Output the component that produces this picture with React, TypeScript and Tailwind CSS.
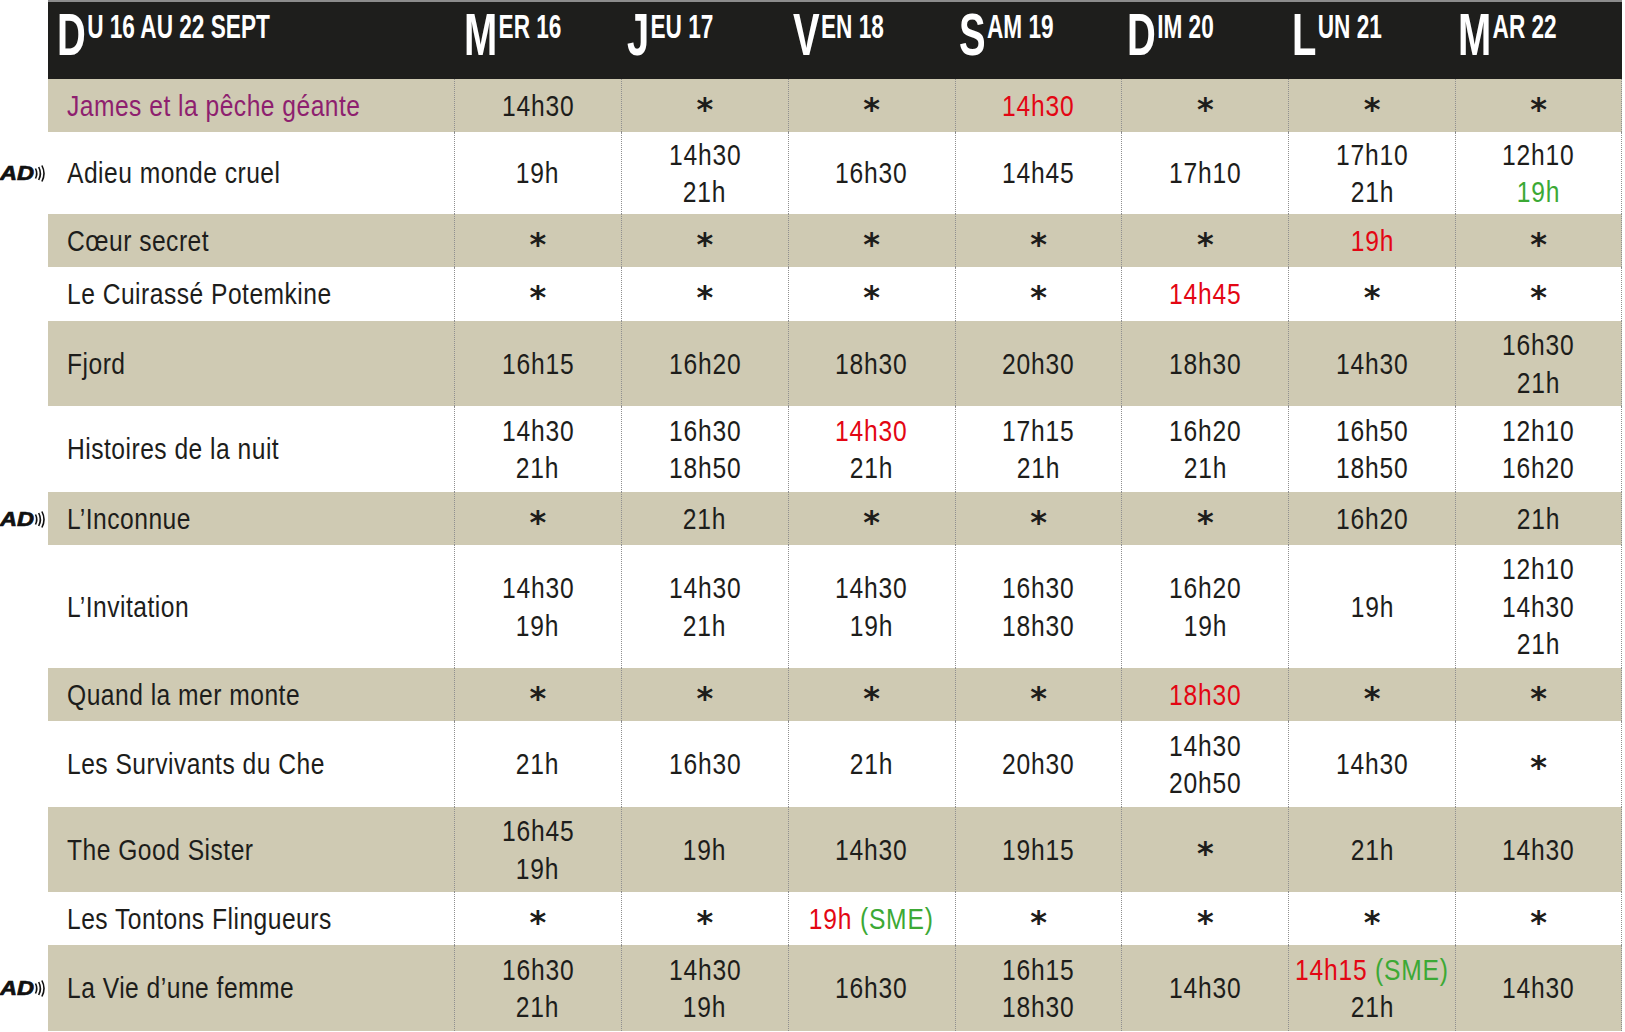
import React from "react";

type RowData = {
  name: string;
  purple?: boolean;
  ad?: boolean;
  tan: boolean;
  h: string;
  cells: string[];
};

const rows: RowData[] = [
  { name: "James et la pêche géante", purple: true, tan: true, h: "h-[53px]", cells: ["14h30", "*", "*", "r:14h30", "*", "*", "*"] },
  { name: "Adieu monde cruel", ad: true, tan: false, h: "h-[82px]", cells: ["19h", "14h30\n21h", "16h30", "14h45", "17h10", "17h10\n21h", "12h10\ng:19h"] },
  { name: "Cœur secret", tan: true, h: "h-[53px]", cells: ["*", "*", "*", "*", "*", "r:19h", "*"] },
  { name: "Le Cuirassé Potemkine", tan: false, h: "h-[54px]", cells: ["*", "*", "*", "*", "r:14h45", "*", "*"] },
  { name: "Fjord", tan: true, h: "h-[85px]", cells: ["16h15", "16h20", "18h30", "20h30", "18h30", "14h30", "16h30\n21h"] },
  { name: "Histoires de la nuit", tan: false, h: "h-[86px]", cells: ["14h30\n21h", "16h30\n18h50", "r:14h30\n21h", "17h15\n21h", "16h20\n21h", "16h50\n18h50", "12h10\n16h20"] },
  { name: "L’Inconnue", ad: true, tan: true, h: "h-[53px]", cells: ["*", "21h", "*", "*", "*", "16h20", "21h"] },
  { name: "L’Invitation", tan: false, h: "h-[123px]", cells: ["14h30\n19h", "14h30\n21h", "14h30\n19h", "16h30\n18h30", "16h20\n19h", "19h", "12h10\n14h30\n21h"] },
  { name: "Quand la mer monte", tan: true, h: "h-[53px]", cells: ["*", "*", "*", "*", "r:18h30", "*", "*"] },
  { name: "Les Survivants du Che", tan: false, h: "h-[86px]", cells: ["21h", "16h30", "21h", "20h30", "14h30\n20h50", "14h30", "*"] },
  { name: "The Good Sister", tan: true, h: "h-[85px]", cells: ["16h45\n19h", "19h", "14h30", "19h15", "*", "21h", "14h30"] },
  { name: "Les Tontons Flingueurs", tan: false, h: "h-[53px]", cells: ["*", "*", "r:19h|g: (SME)", "*", "*", "*", "*"] },
  { name: "La Vie d’une femme", ad: true, tan: true, h: "h-[86px]", cells: ["16h30\n21h", "14h30\n19h", "16h30", "16h15\n18h30", "14h30", "r:14h15|g: (SME)\n21h", "14h30"] },
];

const days: { big: string; rest: string; pad: string }[] = [
  { big: "M", rest: "ER 16", pad: "pl-[10px]" },
  { big: "J", rest: "EU 17", pad: "pl-[6px]" },
  { big: "V", rest: "EN 18", pad: "pl-[5px]" },
  { big: "S", rest: "AM 19", pad: "pl-[4px]" },
  { big: "D", rest: "IM 20", pad: "pl-[6px]" },
  { big: "L", rest: "UN 21", pad: "pl-[4px]" },
  { big: "M", rest: "AR 22", pad: "pl-[3px]" },
];

function HeadLabel({ big, rest }: { big: string; rest: string }) {
  return (
    <div className="inline-flex items-start whitespace-nowrap text-white font-bold font-['Liberation_Sans',sans-serif] scale-x-[0.665] origin-left">
      <span className="text-[60px] leading-none">{big}</span>
      <span className="text-[34px] leading-none mt-[4px] ml-[2px]">{rest}</span>
    </div>
  );
}

function AdIcon() {
  return (
    <svg width="47" height="20" viewBox="0 0 47 20" className="block">
      <text
        x="0"
        y="16.5"
        fontSize="20"
        fontWeight="900"
        fontStyle="italic"
        fontFamily="Liberation Sans, Arial, sans-serif"
        textLength="34"
        lengthAdjust="spacingAndGlyphs"
        fill="#111"
        stroke="#111"
        strokeWidth="0.7"
      >
        AD
      </text>
      <path d="M35.5 5.5 Q38 10.5 35.5 15.5" stroke="#111" strokeWidth="1.6" fill="none" />
      <path d="M38.7 4 Q42.1 10.5 38.7 17" stroke="#111" strokeWidth="1.6" fill="none" />
      <path d="M41.9 2.5 Q46.1 10.5 41.9 18.5" stroke="#111" strokeWidth="1.6" fill="none" />
    </svg>
  );
}

function Star() {
  return <span className="relative top-[4px] text-[32px] font-bold font-['DejaVu_Sans',sans-serif] text-[#1d1d1b]">*</span>;
}

function Seg({ s }: { s: string }) {
  if (s.startsWith("r:")) return <span className="text-[#e30613]">{s.slice(2)}</span>;
  if (s.startsWith("g:")) return <span className="text-[#3ca935]">{s.slice(2)}</span>;
  return <span>{s}</span>;
}

function TimeCell({ v, last }: { v: string; last: boolean }) {
  const border = last
    ? "border-l border-r border-dotted border-[#8f8f8f]"
    : "border-l border-dotted border-[#8f8f8f]";
  return (
    <div className={`min-w-0 flex flex-col items-center justify-center ${border}`}>
      {v === "*" ? (
        <div className="leading-[37.5px]">
          <Star />
        </div>
      ) : (
        v.split("\n").map((line, i) => (
          <div key={i} className="leading-[37.5px] whitespace-pre tracking-[1px] scale-x-[0.82]">
            {line.split("|").map((s, j) => (
              <Seg key={j} s={s} />
            ))}
          </div>
        ))
      )}
    </div>
  );
}

export default function App() {
  return (
    <div className="w-[1625px] h-[1032px] bg-white overflow-hidden font-['Liberation_Sans',sans-serif] text-[#1d1d1b]">
      {/* header */}
      <div className="flex">
        <div className="w-[48px] shrink-0" />
        <div className="w-[1574px] h-[79px] bg-[#1e1e1c] border-t-2 border-[#8c8c8c] grid grid-cols-[406px_repeat(7,minmax(0,1fr))] pt-[3px]">
          <div className="pl-[9px]">
            <HeadLabel big="D" rest="U 16 AU 22 SEPT" />
          </div>
          {days.map((d, i) => (
            <div key={i} className={d.pad}>
              <HeadLabel big={d.big} rest={d.rest} />
            </div>
          ))}
        </div>
      </div>
      {/* rows */}
      {rows.map((r, i) => (
        <div key={i} className={`flex ${r.h}`}>
          <div className="w-[48px] shrink-0 flex items-center">{r.ad ? <AdIcon /> : null}</div>
          <div
            className={`w-[1574px] grid grid-cols-[406px_repeat(7,minmax(0,1fr))] text-[30px] ${
              r.tan ? "bg-[#cfcab3]" : "bg-white"
            }`}
          >
            <div
              className={`flex items-center pl-[19px] leading-[37.5px] ${
                r.purple ? "text-[#8e1f6f]" : "text-[#1d1d1b]"
              }`}
            >
              <span className="inline-block whitespace-nowrap tracking-[0.6px] scale-x-[0.82] origin-left">{r.name}</span>
            </div>
            {r.cells.map((c, j) => (
              <TimeCell key={j} v={c} last={j === 6} />
            ))}
          </div>
        </div>
      ))}
    </div>
  );
}
